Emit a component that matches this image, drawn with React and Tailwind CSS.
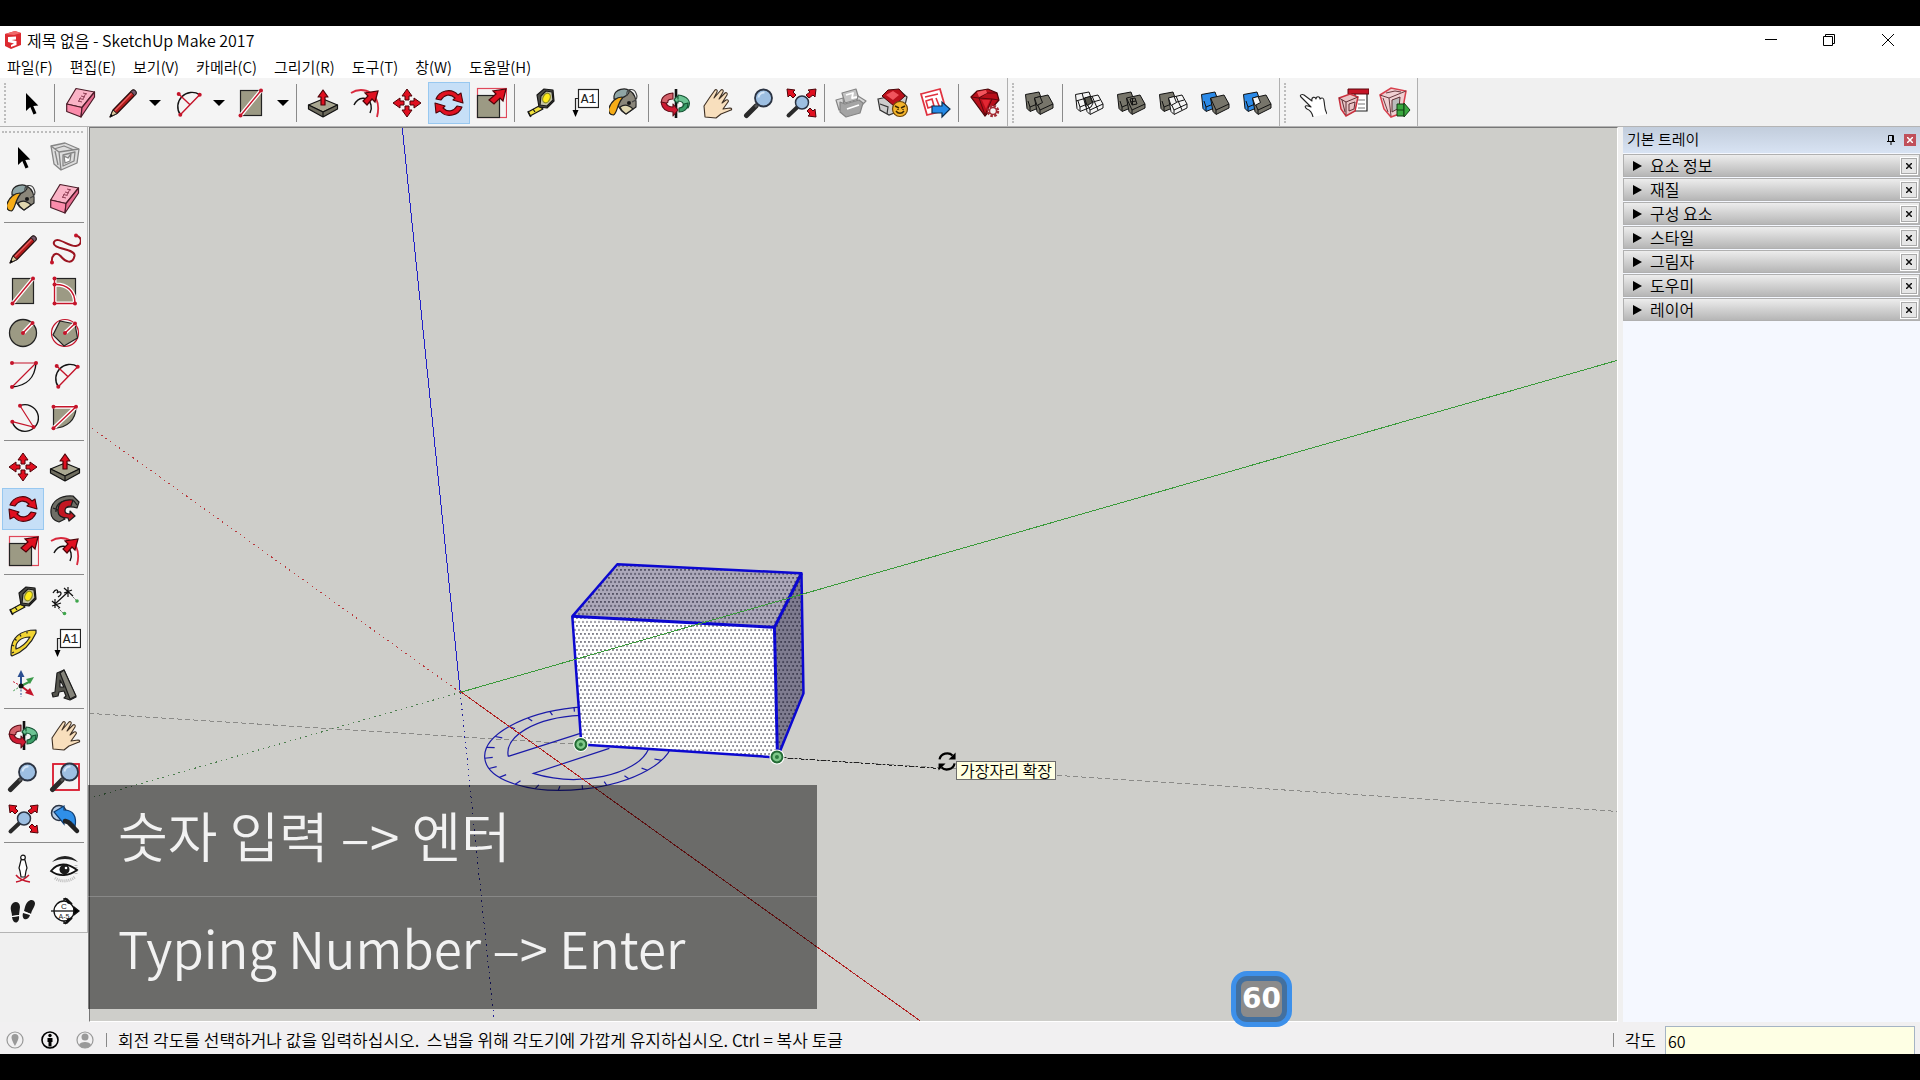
const RED = "#e01020"
const CRIMSON = "#c4142a"
const TAUPE = "#9c9a84"

function Glyph({ children }) {
  return (
    <svg viewBox="0 0 32 32" className="h-8 w-8 shrink-0" fill="none" aria-hidden="true">
      {children}
    </svg>
  )
}

function Dots({ at }) {
  return at.map(([x, y]) => <circle key={`${x}-${y}`} cx={x} cy={y} r="2" fill={CRIMSON} />)
}

function HaloLine({ d }) {
  return (
    <>
      <path d={d} stroke="#fff" strokeWidth="4" />
      <path d={d} stroke={CRIMSON} strokeWidth="1.4" />
    </>
  )
}

function Magnifier() {
  return (
    <>
      <path d="M3.500 28.500 13 19" stroke="#2a2a2a" strokeWidth="5" strokeLinecap="round" />
      <path d="M12 20l3-3" stroke="#555" strokeWidth="2.500" />
      <circle cx="20.500" cy="11" r="8.500" fill="#9dbfe2" stroke="#2b3342" strokeWidth="1.800" />
      <path d="M15.500 10.500a5.500 5.500 0 0 1 6-5" stroke="#d5e6f7" strokeWidth="2" />
    </>
  )
}

// two overlapping slabs shared by the solid tools
function Slabs({ back, front, middle, wire, inner }) {
  const line = { stroke: "#111", strokeWidth: 1, strokeLinejoin: "round" }
  return (
    <>
      <path d="M2.500 7.500 16 5l4 11-2 4-11 4.500-3-3z" fill={back} {...line} />
      <path d="M7 20l11-4.500M5 14l2 6v4" {...line} />
      <path d="M11.500 11 25 8l5 9v4l-13 6.500-3-3z" fill={front} {...line} />
      <path d="M11.500 11 17 23v4M17 23l13-6" {...line} />
      {wire === "front" && <path d="M19 9l6 14M13 17l14-4" {...line} />}
      {wire === "both" && <path d="M9 6l4 14M3 14l14-4M19 9l6 14M13 17l14-4" {...line} />}
      {middle && <path d="M11.500 11 17 9.500l2.500 6-5.500 3z" fill={middle} {...line} />}
      {inner && <path d="M15 12l5-1 2 6-5 1zM17.500 11v7M15 15l6-1" {...line} />}
    </>
  )
}

const RubyBody = () => (
  <>
    <path d="M2 10 8 4l11-2 9 4 2 7-14 16z" fill="#b80f1a" stroke="#4a0508" strokeWidth="1.200" />
    <path d="M2 10l8 1 8-5 10 0M10 11l6 17 7-16 7 1M10 11l13 1" stroke="#5d070c" />
    <path d="M8 5l9-2 1 3-8 4z" fill="#f2555d" />
    <path d="M13 13h8l-4 9z" fill="#e22733" />
  </>
)

const glyphs = {
  select: <path d="M11 6v18l4.300-4 3.200 7.500 3-1.300L18.300 19l5-.5z" fill="#000" />,
  component: (
    <g stroke="#858585" strokeWidth="1.300" strokeLinejoin="round">
      <path d="M2 5 16 2l14 6-2 14-16 7-7-6z" fill="#ddd" />
      <path d="M2 5l8 6 20-3M10 11l2 18M5 8l10-3 10 4M6 10l3 14M14 14l12-3-1 9-11 5z" />
      <path d="M15 15l4 2 3-4-1 7-5 2z" fill="#fff" />
    </g>
  ),
  paint: (
    <g stroke="#222" strokeWidth="1.200" strokeLinejoin="round">
      <path d="M7 7 20 3c5 3 8 8 7 17l-10 7c-6-3-10-9-10-20z" fill="#8a867a" />
      <path d="M11 20c4-3 9-2 13 2l-7 5c-3-2-5-3-6-7z" fill="#e0d6ae" />
      <path d="M5 9c1-7 12-9 15-5 1 4-9 9-15 8z" fill="#8fa5a5" />
      <path d="M18 9c-2-8 7-8 9-3 2 4 1 7-4 9" stroke="#444" />
      <path d="M13 10C8 10 2 14-.5 22c0 3 1 6 5 6 4-2 3-10 9-17z" fill="#f7ad17" />
      <circle cx="20" cy="16" r="1.500" fill="#111" />
    </g>
  ),
  eraser: (
    <g stroke="#4b1c28" strokeWidth="1.200" strokeLinejoin="round">
      <path d="M11 1.500 29.500 5 17 20.500 1.700 17z" fill="#fab3c6" />
      <path d="M1.700 17 17 20.500 16 30 1.700 24.500z" fill="#fb8cab" />
      <path d="M17 20.500 29.500 5v5L16 30z" fill="#e86d90" />
      <path d="M13 14l4 1M14.500 11.500l4 1M16 9l4 1M18 6l4 1M13.500 14.500l2-4M18 12l3-6" stroke="#8e3e54" strokeWidth="1" />
    </g>
  ),
  pencil: (
    <g strokeLinejoin="round">
      <path d="M3 30 6 23 25 3.500c2-1.500 5 1 4 3.500L10 26.500z" fill="#b31b1b" stroke="#2a0d0d" strokeWidth="1.200" />
      <path d="M3 30 6 23l4 3.500z" fill="#d9c79c" stroke="#222" />
      <path d="M3 30l1.200-3 1.600 1.500z" fill="#000" />
      <path d="M8 23.500 24.500 6.500" stroke="#e86060" strokeWidth="1.200" />
      <path d="M24 4.500 25 3.500c2-1.500 5 1 4 3.500l-1.500 1.500z" fill="#77576a" stroke="#222" />
    </g>
  ),
  freehand: (
    <>
      <path
        d="M27 2.500c7 2 6 9.500 0 10.500C20 14 8 2.500 5 9c-3 8 22 6 20.500 14-2 9-9 6-14 0C7 18 2 22 3 30"
        stroke="#9b1420"
        strokeWidth="2"
      />
      <Dots at={[[27, 2.5], [3, 29.5]]} />
    </>
  ),
  rect: (
    <>
      <rect x="5.500" y="3.500" width="21" height="25" fill={TAUPE} stroke="#222" strokeWidth="1.200" />
      <HaloLine d="M5.500 28.500 26 3.500" />
      <Dots at={[[5.5, 28.5], [26, 3.5]]} />
    </>
  ),
  rotatedRect: (
    <>
      <rect x="5.500" y="3.500" width="21" height="25" fill={TAUPE} stroke="#222" strokeWidth="1.200" />
      <HaloLine d="M5.500 9.500C18 9 26 16 26 28.500M5.500 3.500v25H26" />
      <Dots at={[[5.5, 3.5], [5.5, 9.5], [5.5, 28.5], [26, 28.5]]} />
    </>
  ),
  circle: (
    <>
      <circle cx="16" cy="16" r="13.500" fill={TAUPE} stroke="#222" strokeWidth="1.300" />
      <HaloLine d="M16 16 25.500 6" />
      <Dots at={[[16, 16], [25.5, 6]]} />
    </>
  ),
  polygon: (
    <>
      <circle cx="16" cy="16" r="13.500" stroke={CRIMSON} strokeWidth="1.200" />
      <path d="M11 4 26 7l2.500 14L15 29 4 18z" fill={TAUPE} stroke="#222" strokeWidth="1.200" />
      <HaloLine d="M16 16 26 6.500" />
      <Dots at={[[16, 16], [26, 6.5]]} />
    </>
  ),
  arc: (
    <>
      <path d="M29 4C28 18 20 27 5 28" stroke="#111" strokeWidth="1.400" />
      <path d="M5 4h24L5 28" stroke={CRIMSON} strokeWidth="1.200" />
      <Dots at={[[5, 4], [29, 4], [5, 28]]} />
    </>
  ),
  arc2: (
    <>
      <path d="M28.700 7.700A14.200 14.200 0 0 0 9.300 27.700" stroke="#111" strokeWidth="1.400" />
      <path d="M28.700 7.700 9.300 27.700M7.700 7 19 17.700" stroke={CRIMSON} strokeWidth="1.400" />
      <Dots at={[[28.7, 7.7], [9.3, 27.7], [7.7, 7]]} />
    </>
  ),
  arc3: (
    <>
      <path d="M13 4.700A13.300 13.300 0 1 1 5.300 20.700" stroke="#111" strokeWidth="1.400" />
      <path d="M13 4.700 26.500 26 5.300 20.700" stroke={CRIMSON} strokeWidth="1.200" />
      <Dots at={[[13, 4.7], [26.5, 26], [5.3, 20.7]]} />
    </>
  ),
  pie: (
    <>
      <path d="M4.500 5.700H27C27 19 18 27 4.500 27.300z" fill={TAUPE} stroke="#222" strokeWidth="1.200" />
      <HaloLine d="M4.500 5.700H27L4.500 27.300" />
      <Dots at={[[4.5, 5.7], [27, 5.7], [4.5, 27.3]]} />
    </>
  ),
  move: (
    <g fill={RED} stroke="#4d0308" strokeWidth="1">
      {[0, 90, 180, 270].map((deg) => (
        <path key={deg} d="M16 2l5 7h-3v4h-4V9h-3z" transform={`rotate(${deg} 16 16)`} />
      ))}
    </g>
  ),
  pushPull: (
    <g stroke="#111" strokeWidth="1.200" strokeLinejoin="round">
      <path d="M1.500 18 16 12l14.500 6L16 25z" fill="#a9a791" />
      <path d="M1.500 18 16 25v5L1.500 22zM30.500 18 16 25v5l14.500-8z" fill="#6e6c5e" />
      <path d="M16 3l5 7h-3v8h-4v-8h-3z" fill={RED} stroke="#4d0308" />
    </g>
  ),
  rotate: (
    <g fill={RED} stroke="#4d0308" strokeWidth="1.100" strokeLinejoin="round">
      <path d="M3 12C6 4 18 0 25 8l3-2 2 10-10-3 2-2c-5-5-11-3-14 2z" />
      <path d="M29 20C26 28 14 32 7 24l-4 2-1-10 10 3-2 2c5 5 11 3 14-2z" />
    </g>
  ),
  followMe: (
    <g stroke="#1d1d1d" strokeWidth="1.200" strokeLinejoin="round">
      <path d="M2 20C1 8 12 2 24 3l6 6-2 6c-9-3-15 0-15 6 0 3 1 4 3 5l-6 3c-5-1-8-5-8-9z" fill="#6f6e66" />
      <path d="M7 19C6 10 15 6 25 8l3 4M4 15l7 3" />
      <path d="M9 18C9 9 15 6 24 7l-2 6c-4 0-6 2-6 5 0 2 2 3 5 3v-3l5 5-6 5-1-3c-6 0-10-2-10-7z" fill="#c21722" />
    </g>
  ),
  scale: (
    <>
      <rect x="2.500" y="1.500" width="29" height="29" stroke="#e0485a" strokeWidth="1.200" />
      <rect x="2.500" y="8.500" width="22" height="22" fill={TAUPE} stroke="#222" strokeWidth="1.200" />
      <path d="M31 2l-3 12-3-3-6 6-5-4 7-6-3-3z" fill={RED} stroke="#4d0308" strokeWidth="1.200" />
    </>
  ),
  offset: (
    <>
      <path d="M2 6C14-2 34 6 28 30" stroke="#d8283c" strokeWidth="1.800" />
      <path d="M5 18c4-8 14-10 17 0 1 4 0 6-1 8" stroke="#111" strokeWidth="1.400" />
      <path d="M29 4l-3 11-3-3-5 6-4-4 5-5-3-3z" fill={RED} stroke="#4d0308" strokeWidth="1.200" />
    </>
  ),
  tape: (
    <g stroke="#161616" strokeWidth="1.200" strokeLinejoin="round">
      <path d="M3 25l11-6 4 3L5 29z" fill="#f1e23c" />
      <path d="M8 22l2 3M3 24l3 6" />
      <path d="M12 8 19 2l9 1 1 11-7 7-8-1z" fill="#4b4b45" />
      <path d="M16 9l5-5 6 1 1 8-6 6-7-1z" fill="#c5c4a8" />
      <ellipse cx="21.500" cy="11" rx="3.500" ry="5" transform="rotate(25 21.500 11)" fill="#ffec1a" stroke="#8a8a20" />
    </g>
  ),
  dimension: (
    <>
      <path d="M6 19 19 7M3 16l8 7M6 14v9M3 21l9-3M15 3l9 8M19 2v10M15 8l8-3" stroke="#111" strokeWidth="1.200" />
      <path d="M9 23l5 5M22 10l5 5" stroke="#666" strokeDasharray="2 1" />
      <path d="M4 8c3-5 6-3 4 0 4-3 6 1 1 4" stroke="#111" strokeWidth="1.300" />
      <circle cx="15.500" cy="28.500" r="1.800" fill="#3ea54b" />
      <circle cx="28" cy="16" r="1.800" fill="#3ea54b" />
    </>
  ),
  protractor: (
    <g stroke="#222" strokeWidth="1.200" strokeLinejoin="round">
      <path d="M4 24C4 11 13 3 29 3v3C24 17 16 25 5 29l-1-1z" fill="#f1d433" />
      <path d="M9 22c-1-7 5-12 14-12-3 5-8 10-14 12z" fill="#f4f4f4" />
      <path d="M5 18l2 1M8 12l1.500 1.500M13 7.500l1 2M20 4.500v2M5 26l2-1" />
    </g>
  ),
  text: (
    <>
      <rect x="11.500" y="2.500" width="20" height="18" fill="#fff" stroke="#222" strokeWidth="1.200" />
      <text x="21.500" y="16" fontSize="13" textAnchor="middle" fill="#222" className="font-['Liberation_Mono',monospace]">
        A1
      </text>
      <path d="M11 11.500H8.500v12" stroke="#222" strokeWidth="1.200" />
      <path d="M5.500 23h6l-3 7z" fill="#000" />
    </>
  ),
  axes: (
    <>
      <path d="M14 17V7" stroke="#2b4f91" strokeWidth="2" />
      <path d="M10.500 8 14 1l3.500 7z" fill="#2b4f91" />
      <path d="M14 17l8-4" stroke="#3c9a4a" strokeWidth="2" />
      <path d="M19 10l8-2-4 7z" fill="#3c9a4a" />
      <path d="M14 17l8 6" stroke={CRIMSON} strokeWidth="2" />
      <path d="M18 24l5-5 4 8z" fill={CRIMSON} />
      <path d="M14 17v11" stroke="#2b4f91" strokeDasharray="2 1.500" />
      <path d="M14 17l-8 5" stroke="#3c9a4a" strokeDasharray="2 1.500" />
      <path d="M14 17 5 12" stroke={CRIMSON} strokeDasharray="2 1.500" />
      <circle cx="14" cy="17" r="2.500" fill="#111" />
    </>
  ),
  text3d: (
    <g stroke="#1d1d1d" strokeWidth="1.200" strokeLinejoin="round">
      <path d="M8 4l7-3 12 27-6 3-6-2 2-2-2-5-5 1-1 4-5 1-1-4 3-1z" fill="#55554e" />
      <path d="M11 4l4-3 12 26-6 3z" fill="#85847a" />
      <path d="M11 11l4 7h-4z" fill="#f4f4f4" />
    </g>
  ),
  orbit: (
    <g strokeLinejoin="round" strokeWidth="1.100">
      <path d="M14 6C4 7 0 13 4 19l5-4c-1-2 2-3 5-3z" fill="#d4626b" stroke="#5d0d17" />
      <path d="M17 2v29" stroke="#111" strokeWidth="2.600" />
      <path d="M19 12V9c-2 1-3 2-4 4 2 2 3 3 4 3v-2c4 0 6 2 5 5l5 2c4-7-1-12-10-13z" fill="#6cc493" stroke="#145232" />
      <path d="M29 16c0 6-4 9-9 9v-4c3 0 5-2 5-4z" fill="#3b9e68" stroke="#145232" />
      <path d="M2 15c1 7 6 10 12 10v4l5-6-5-6v3c-4 0-6-1-7-4z" fill="#cf1a32" stroke="#5d0d17" />
    </g>
  ),
  pan: (
    <path
      d="M4 30 3 19l6-9 5-7c1-1 3 0 2 2l-3 6 7-8c1-1 3 0 2 2l-4 7 6-6c1-1 3 0 2 2l-5 8 4-3c2-1 3 1 2 2l-5 7 7-1c2 0 2 2 1 2l-10 4-5 4z"
      fill="#f8dfbd"
      stroke="#3d2f23"
      strokeWidth="1.100"
      strokeLinejoin="round"
    />
  ),
  zoom: <Magnifier />,
  zoomWindow: (
    <>
      <rect x="4" y="3" width="26" height="26" stroke="#d9182c" strokeWidth="1.800" />
      <Magnifier />
    </>
  ),
  extents: (
    <>
      <path d="M3.500 28.500 12 20.500" stroke="#2a2a2a" strokeWidth="4" strokeLinecap="round" />
      <circle cx="17" cy="15.500" r="6.500" fill="#9dbfe2" stroke="#2b3342" strokeWidth="1.500" />
      <g fill={RED} stroke="#4d0308">
        <path d="M2 2l8 1-2 2 3 3-3 3-3-3-2 2z" />
        <path d="M31 2l-8 1 2 2-4 3 3 3 4-3 2 2z" />
        <path d="M31 30l-8-1 2-2-3-3 3-3 3 3 2-2z" />
      </g>
    </>
  ),
  previous: (
    <>
      <circle cx="10" cy="10" r="7.500" fill="#b7cde6" stroke="#2b3342" strokeWidth="1.500" />
      <path d="M5 9 15 3v4c9 0 13 6 11 17-2-5-5-7-11-7v4z" fill="#2f8fe8" stroke="#0e3c70" strokeWidth="1.200" />
      <path d="M16 18l3 1 9 9" stroke="#222" strokeWidth="4.500" strokeLinecap="round" />
    </>
  ),
  camera: (
    <>
      <path d="M9 29c6-1 10-4 13-7M9 22c3 4 8 6 14 7" stroke={CRIMSON} strokeWidth="1.500" />
      <path d="M14 7c1-1 3-1 4 0l2 8-1 3-1 6h-4l-1-6-1-3z" fill="#fff" stroke="#111" strokeWidth="1.200" />
      <circle cx="16" cy="4.500" r="2.300" fill="#fff" stroke="#111" strokeWidth="1.200" />
    </>
  ),
  look: (
    <>
      <path d="M3 9C10 1 22 1 29 9c-8-4-18-4-26 0z" fill="#222" />
      <path d="M6 25c5 4 14 4 20-1" stroke="#bbb" strokeWidth="3" strokeDasharray="1 1" />
      <path d="M27 12v9" stroke="#bbb" strokeWidth="3" strokeDasharray="1 1" />
      <path d="M2 18c7-9 17-8 26-1-8 6-18 7-26 1z" fill="#fff" stroke="#111" strokeWidth="1.800" />
      <circle cx="15.500" cy="16.500" r="5" fill="#1a1a1a" />
      <circle cx="17" cy="15" r="1.300" fill="#fff" />
    </>
  ),
  walk: (
    <g fill="#1c1c1c">
      <path d="M4 11c2-6 9-5 9 1l-1 8-7 1C5 17 3 15 4 11zM5 22l7-1c1 8-6 9-7 1z" />
      <path d="M18 12c2-8 9-9 10-4 0 4-3 6-4 11l-7-3zM16 18l7 2c-2 7-9 5-7-2z" />
      <path d="M5 21.500l7-1M17 17l7 2.500" stroke="#fff" />
    </g>
  ),
  section: (
    <g stroke="#111" strokeWidth="1.300">
      <path d="M15 4h3l5 5M15 28h3l5-5M15 3v3M15 26v3" />
      <circle cx="15" cy="16" r="10" fill="#fff" />
      <path d="M2 16h28" />
      <path d="M16 3l7 6-4-1zM25 12l5 4-5 4zM16 29l7-6-4 1z" fill="#000" />
      <text x="15" y="14" fontSize="8" textAnchor="middle" fill="#222" stroke="none" className="font-['Liberation_Sans',sans-serif]">
        C
      </text>
      <text x="15" y="23.500" fontSize="7" textAnchor="middle" fill="#222" stroke="none" className="font-['Liberation_Sans',sans-serif]">
        A-5
      </text>
    </g>
  ),
  warehouse: (
    <g stroke="#858585" strokeWidth="1.200" strokeLinejoin="round">
      <path d="M1 13l7-2 1 9-5 3z" fill="#d8d8d8" />
      <path d="M7 6 21 2l3 10-14 4z" fill="#c4c4c4" />
      <path d="M23 9l8 5-5 5-4-6z" fill="#d8d8d8" />
      <path d="M5 15l5 2 14-4 4 3-3 10-14 4-6-5z" fill="#a4a4a4" />
      <path d="M11 8l7-2-1 5 5-1M12 22l12-4" stroke="#fff" strokeWidth="1.800" />
    </g>
  ),
  extension: (
    <>
      <path d="M1 12l9-2 12-7 8 7-3 12-15 6-9-5z" fill="#ccc" stroke="#333" strokeWidth="1.200" />
      <path d="M5 9l6-6 11-1 6 7-11 10z" fill="#b9101b" stroke="#4a0508" />
      <path d="M9 8l7-4 6 4-6 5z" fill="#f0545d" />
      <path d="M3 17l8 3-1 7" stroke="#333" strokeWidth="1.200" />
      <circle cx="23" cy="22" r="7.500" fill="#f4b52b" stroke="#6d4606" strokeWidth="1.200" />
      <path d="M18 19l4 2M28 19l-4 2M19 24c2 3 6 3 8 0M21 22v1M26 22v1" stroke="#3c2803" strokeWidth="1.400" />
    </>
  ),
  layout: (
    <>
      <path d="M2 7 21 2l6 21-19 5z" fill="#fff" stroke="#e0323f" strokeWidth="1.800" />
      <path d="M6 10l13-3M7 14l6-2 2 7-6 2zM17 11l4 10" stroke="#e0323f" strokeWidth="1.600" />
      <path d="M13 19h10v-4l8 7-8 8v-4H13z" fill="#258ae6" stroke="#0d2c4c" strokeWidth="1.200" />
    </>
  ),
  ruby: (
    <>
      <RubyBody />
      <circle cx="24" cy="24" r="5" fill="#f4f4f4" stroke="#a32a33" strokeWidth="2.500" strokeDasharray="2.500 1.400" />
      <circle cx="24" cy="24" r="3.500" fill="#f4f4f4" stroke="#a32a33" strokeWidth="1.500" />
    </>
  ),
  shell: <Slabs back="#77756a" front="#77756a" middle="#77756a" />,
  intersect: <Slabs back="#f4f4f4" front="none" middle="#5a594f" wire="both" />,
  union: <Slabs back="#77756a" front="#77756a" inner />,
  subtract: <Slabs back="#77756a" front="#f4f4f4" middle="#f4f4f4" wire="front" />,
  trim: <Slabs back="#2b8ae8" front="#77756a" />,
  split: <Slabs back="#2b8ae8" front="#77756a" middle="#f4f4f4" />,
  interact: (
    <path
      d="M18 30c-1-5-3-7-6-8-3-2-2-4 1-3l3 1L6 10c-2-2 1-3 3-2l8 6c-1-4 3-5 4-2 0-3 4-3 4 0 2-2 4-1 4 2 1 4 0 8 3 13"
      fill="#fff"
      stroke="#222"
      strokeWidth="1.100"
      strokeLinejoin="round"
    />
  ),
  options: (
    <>
      <path d="M18 5h12v19H18z" fill="#fff" stroke="#222" strokeWidth="1.200" />
      <path d="M21 13h7M21 17h7M21 21h7" stroke="#777" />
      <path d="M11 2h21v5H11z" fill="#c61527" stroke="#5d0911" />
      <path d="M2 11l11-4 8 3-3 14-9 5-5-7z" fill="#e9c4c6" stroke="#c92f3d" strokeWidth="1.500" />
      <path d="M2 11l7 4 12-5M9 15v13M12 17l6-2-1 7-5 2zM5 13l3 12" stroke="#5f3035" />
    </>
  ),
  attributes: (
    <>
      <path d="M1 8 12 1l15 3-4 22-11 4-7-8z" fill="#efd0d2" stroke="#d8404d" strokeWidth="1.500" />
      <path d="M1 8l9 3 17-7M10 11l2 18M7 6l9-2 6 1M4 11l5 14" stroke="#6a3b40" />
      <path d="M13 13l8-3-1 11-7 4z" fill="#bbb" stroke="#5f3035" />
      <path d="M18 17h7v12h-7zM18 23h7" fill="#3aa83f" stroke="#123f15" />
      <path d="M25 16l6 7-6 7z" fill="#3aa83f" stroke="#123f15" />
    </>
  ),
}

const mainTools = [
  [["select"], "|", ["eraser"], ["pencil", true], ["arc2", true], ["rect", true], "|",
    ["pushPull"], ["offset"], ["move"], ["rotate"], ["scale"], "|", ["tape"], ["text"], ["paint"], "|",
    ["orbit"], ["pan"], ["zoom"], ["extents"], "|", ["warehouse"], ["extension"], ["layout"], "|", ["ruby"]],
  [["shell"], "|", ["intersect"], ["union"], ["subtract"], ["trim"], ["split"]],
  [["interact"], ["options"], ["attributes"]],
]

const sideTools = [
  ["select", "component", "paint", "eraser"],
  ["pencil", "freehand", "rect", "rotatedRect", "circle", "polygon", "arc", "arc2", "arc3", "pie"],
  ["move", "pushPull", "rotate", "followMe", "scale", "offset"],
  ["tape", "dimension", "protractor", "text", "axes", "text3d"],
  ["orbit", "pan", "zoom", "zoomWindow", "extents", "previous"],
  ["camera", "look", "walk", "section"],
]

const menus = ["파일(F)", "편집(E)", "보기(V)", "카메라(C)", "그리기(R)", "도구(T)", "창(W)", "도움말(H)"]
const panels = ["요소 정보", "재질", "구성 요소", "스타일", "그림자", "도우미", "레이어"]

function ToolButton({ name }) {
  const active = name === "rotate"
  return (
    <button
      type="button"
      aria-label={name}
      aria-pressed={active}
      className={`flex h-[42px] w-[42px] items-center justify-center border ${
        active ? "border-[#98c8f0] bg-[#c6dff7]" : "border-transparent"
      }`}
    >
      <Glyph>{glyphs[name]}</Glyph>
    </button>
  )
}

function TitleBar() {
  return (
    <div className="flex h-7 items-center justify-between bg-white pr-[2px] pl-1">
      <div className="flex items-center gap-[5px]">
        <svg viewBox="0 0 18 20" className="h-5 w-[18px]" aria-hidden="true">
          <path d="M1 4 11 1l6 2v12l-10 4-6-3z" fill="#dc2a30" />
          <path d="M1 4l9 1 7-2-6-2z" fill="#f06a6a" />
          <path d="M4 7l8-.5v3L7.500 10l5 1v4L7 17v-2l3-1.500L4 12z" fill="#fff" />
        </svg>
        <h1 className="text-base leading-5 font-[350]">제목 없음 - SketchUp Make 2017</h1>
      </div>
      <div className="flex">
        <button type="button" aria-label="최소화" className="flex h-7 w-[58px] items-center justify-center">
          <svg viewBox="0 0 12 12" className="h-3 w-3" stroke="#000">
            <path d="M0 5.500h12" />
          </svg>
        </button>
        <button type="button" aria-label="이전 크기로" className="flex h-7 w-[58px] items-center justify-center">
          <svg viewBox="0 0 12 12" className="h-3 w-3" fill="none" stroke="#000">
            <path d="M.5 2.500h9v9h-9zM2.500 2.500v-2h9v9h-2" />
          </svg>
        </button>
        <button type="button" aria-label="닫기" className="flex h-7 w-[60px] items-center justify-center">
          <svg viewBox="0 0 12 12" className="h-3 w-3" stroke="#000">
            <path d="M0 0l12 12M12 0 0 12" />
          </svg>
        </button>
      </div>
    </div>
  )
}

function Toolbar() {
  return (
    <div className="flex h-[49px] border-b border-[#b4b4b4] bg-[#f0f0f0]">
      {mainTools.map((group, g) => (
        <div key={g} className="flex items-center border-r border-[#b0b0b0] bg-[#f4f4f4] pt-px pr-px pl-1">
          <span className="mr-1 h-10 border-l-2 border-dotted border-[#bdbdbd]" />
          {group.map((item, i) => {
            if (item === "|") return <span key={i} className="mr-[5px] ml-[2px] h-[38px] w-px bg-[#8a8a8a]" />
            const [name, menu] = item
            return (
              <div key={i} className="flex">
                <ToolButton name={name} />
                {menu && (
                  <button type="button" aria-label={`${name} menu`} className="flex w-[22px] items-center justify-center">
                    <svg viewBox="0 0 12 8" className="h-2 w-3">
                      <path d="M0 1h12L6 7z" />
                    </svg>
                  </button>
                )}
              </div>
            )
          })}
        </div>
      ))}
    </div>
  )
}

function SideTools() {
  return (
    <aside className="w-[89px] shrink-0">
      <div className="mr-px border-r border-b border-[#b4b4b4] bg-[#f4f4f4] pt-1 pl-[2px]">
        <div className="mr-1 mb-[3px] border-t-2 border-dotted border-[#bdbdbd]" />
        {sideTools.map((group, i) => (
          <div key={i}>
            {i > 0 && <div className="mt-[2px] mr-[3px] mb-[5px] ml-[2px] h-px bg-[#8a8a8a]" />}
            <div className="grid grid-cols-[42px_42px]">
              {group.map((name) => (
                <ToolButton key={name} name={name} />
              ))}
            </div>
          </div>
        ))}
      </div>
    </aside>
  )
}

// protractor lies flat on the ground plane, so it is drawn as a tilted ellipse
const ticks = Array.from({ length: 24 }, (_, i) => {
  const a = (i * Math.PI) / 12
  return [94 * Math.cos(a), 41 * Math.sin(a), 86 * Math.cos(a), 37 * Math.sin(a)]
})

function Pin({ x, y }) {
  return (
    <g>
      <circle cx={x} cy={y} r="7.500" fill="#fff" />
      <circle cx={x} cy={y} r="5.500" fill="#7fc98a" stroke="#246b35" strokeWidth="2" />
      <circle cx={x} cy={y} r="2" fill="#2f7d40" />
    </g>
  )
}

function Scene() {
  return (
    <svg
      viewBox="90 128 1526 893"
      preserveAspectRatio="xMinYMin slice"
      className="absolute inset-0 h-full w-full"
      fill="none"
      role="img"
      aria-label="모델"
    >
      <defs>
        <pattern id="picked" width="4" height="8" patternUnits="userSpaceOnUse">
          <rect x="0" y="1" width="1.300" height="1.300" fill="#000014" />
          <rect x="2" y="5" width="1.300" height="1.300" fill="#000014" />
        </pattern>
      </defs>
      <g shapeRendering="crispEdges">
        <path d="M89 713 581 744M777 757l840 54" stroke="#8b8b88" strokeDasharray="5 3" />
        <path d="M777 757l162 11" stroke="#222" strokeDasharray="5 2 2 2" />
        <path d="M460 692 89 426" stroke="#b8383c" strokeDasharray="1.500 4" />
        <path d="M460 692 89 798" stroke="#4d7f4f" strokeDasharray="1.500 4" />
        <path d="M460 692l34 330" stroke="#22229a" strokeDasharray="1.500 4" />
        <path d="M460 692 402 127" stroke="#2020c8" />
      </g>

      <g stroke="#1a1aa8" strokeWidth="1.200">
        <g transform="translate(578 748) rotate(-6)">
          <ellipse rx="94" ry="41" />
          {ticks.map(([x1, y1, x2, y2], i) => (
            <path key={i} d={`M${x1} ${y1}L${x2} ${y2}`} />
          ))}
        </g>
        <path d="M508 756C504 736 535 717 580 715M508 756l72-23" />
        <path d="M609 748l-76 25c45 14 103 2 115-24" />
      </g>

      <path d="M617 564l184 9-27 54-202-11z" fill="#aca8ba" />
      <path d="M801 573l2 120-26 64-3-130z" fill="#7f7c90" />
      <path d="M572 616l202 11 3 130-196-13z" fill="#fff" />
      <path d="M617 564l184 9 2 120-26 64-196-13-9-128z" fill="url(#picked)" />
      <g stroke="#0c08d0" strokeWidth="2.500" strokeLinejoin="round">
        <path d="M617 564l184 9 2 120-26 64-196-13-9-128z" />
        <path d="M572 616l202 11 27-54M774 627l3 130" strokeWidth="3" />
      </g>

      <g shapeRendering="crispEdges">
        <path d="M460 692 1617 360" stroke="#3a9a3a" />
        <path d="M460 691l462 331" stroke="#b02020" />
      </g>
      <Pin x="580.500" y="744" />
      <Pin x="776.500" y="756.500" />

      <g stroke="#000" strokeWidth="2.200">
        <path d="M939 759c1-6 9-8 13-4M954 763c-1 6-9 8-13 4" />
        <path d="M955 752v7h-7zM938 770v-7h7z" fill="#000" stroke="none" />
      </g>
    </svg>
  )
}

function Viewport() {
  return (
    <main className="relative min-w-0 flex-1 border border-t-[#777] border-r-white border-b-white border-l-[#777] bg-[#cececa]">
      <Scene />
      <div
        role="tooltip"
        className="absolute top-[633px] left-[866px] border border-[#6b6b6b] bg-[#ffffe1] px-[3px] text-base leading-[17px] font-[350] whitespace-nowrap"
      >
        가장자리 확장
      </div>
      <div className="absolute bottom-3 -left-[2px] w-[729px] bg-black/48 leading-[80px] font-[350] text-[#f2f2f2]">
        <p className="h-28 border-b border-white/20 px-[30px] pt-[10px] text-[54px]">숫자 입력 –&gt; 엔터</p>
        <p className="h-28 px-[30px] pt-[10px] text-[51px]">Typing Number –&gt; Enter</p>
      </div>
      <div className="absolute right-[325px] -bottom-[6px] z-10 rounded-[16px] bg-[#3d90ea] p-[5px]">
        <div className="rounded-[11px] bg-[#43709f] p-[5px]">
          <div className="flex h-9 w-[41px] items-center justify-center rounded-md bg-[#8b8b8b] font-['DejaVu_Sans',sans-serif] text-[28px] leading-8 font-bold text-white">
            60
          </div>
        </div>
      </div>
    </main>
  )
}

function Tray() {
  return (
    <aside className="ml-[5px] w-[297px] shrink-0 bg-[#f5f8ff] font-[350]">
      <div className="mb-px flex h-[26px] items-center justify-between bg-linear-to-b from-[#c2cddc] to-[#d8e3f3] pr-1 pl-1">
        <h2 className="pb-[2px] text-[15px] leading-5">기본 트레이</h2>
        <div className="flex items-center gap-2">
          <button type="button" aria-label="고정" className="pr-px">
            <svg viewBox="0 0 8 10" className="h-[10px] w-2" fill="none" stroke="#000">
              <path d="M1.500 6V.5h5V6M5.500.5V6M0 6.500h8M4 6.500V10" />
            </svg>
          </button>
          <button type="button" aria-label="닫기" className="flex h-3 w-3 items-center justify-center bg-[#c0505a]">
            <svg viewBox="0 0 6 6" className="h-[6px] w-[6px]" stroke="#fff" strokeWidth="1.500">
              <path d="M0 0l6 6M6 0 0 6" />
            </svg>
          </button>
        </div>
      </div>
      {panels.map((title) => (
        <section
          key={title}
          className="mb-px flex h-[23px] items-center border border-[#b0b0b0] bg-linear-to-b from-[#ededed] to-[#b6b6b6] pr-[2px] pl-[9px]"
        >
          <button type="button" className="flex flex-1 items-center gap-2 text-left">
            <svg viewBox="0 0 9 10" className="h-[10px] w-[9px]">
              <path d="M0 0v10l9-5z" />
            </svg>
            <span className="pb-[2px] text-base leading-5">{title}</span>
          </button>
          <button
            type="button"
            aria-label={`${title} 닫기`}
            className="flex h-4 w-4 items-center justify-center border border-[#aaa] bg-[#e6e6e6] outline outline-white"
          >
            <svg viewBox="0 0 6 6" className="h-[6px] w-[6px]" stroke="#111" strokeWidth="1.500">
              <path d="M0 0l6 6M6 0 0 6" />
            </svg>
          </button>
        </section>
      ))}
    </aside>
  )
}

function StatusBar() {
  return (
    <footer className="flex h-8 items-center bg-[#f1f0f1] pt-1 pr-[5px] pl-[6px] text-[17px] leading-5 font-[350]">
      <div className="flex gap-[17px]">
        <button type="button" aria-label="위치">
          <svg viewBox="0 0 18 18" className="h-[18px] w-[18px]" fill="none">
            <circle cx="9" cy="9" r="8" stroke="#999" strokeWidth="1.200" />
            <path d="M9 3a3.500 3.500 0 0 1 3.500 3.500C12.500 9 9 15 9 15S5.500 9 5.500 6.500A3.500 3.500 0 0 1 9 3z" fill="#999" />
          </svg>
        </button>
        <button type="button" aria-label="만든 사람">
          <svg viewBox="0 0 18 18" className="h-[18px] w-[18px]" fill="none">
            <circle cx="9" cy="9" r="8" stroke="#000" strokeWidth="1.600" />
            <circle cx="9" cy="4.500" r="1.700" fill="#000" />
            <path d="M6.500 7h5v4H10.500v4.500h-3V11h-1z" fill="#000" />
          </svg>
        </button>
        <button type="button" aria-label="로그인">
          <svg viewBox="0 0 18 18" className="h-[18px] w-[18px]" fill="none">
            <circle cx="9" cy="9" r="8" stroke="#999" strokeWidth="1.200" />
            <circle cx="9" cy="6" r="3.500" fill="#999" />
            <path d="M3 14c1-4 11-4 12 0-3 4-9 4-12 0z" fill="#999" />
          </svg>
        </button>
      </div>
      <span className="mr-[11px] ml-3 h-[14px] w-px bg-[#888]" />
      <p className="flex-1 whitespace-pre">
        회전 각도를 선택하거나 값을 입력하십시오.&nbsp; 스냅을 위해 각도기에 가깝게 유지하십시오. Ctrl = 복사 토글
      </p>
      <span className="mr-[11px] h-[14px] w-px bg-[#888]" />
      <label htmlFor="vcb" className="mr-[9px]">
        각도
      </label>
      <input
        id="vcb"
        defaultValue="60"
        className="h-7 w-[250px] border border-b-0 border-[#a5b4c4] bg-[#feffe4] px-[2px] text-base outline-none"
      />
    </footer>
  )
}

export default function App() {
  return (
    <div className="flex min-h-screen flex-col bg-black py-[26px] font-['Noto_Sans_CJK_KR',sans-serif] text-black">
      <div className="flex flex-1 flex-col bg-[#f0f0f0]">
        <TitleBar />
        <nav className="flex h-6 items-center gap-[17px] bg-white pt-px pl-[7px] text-[15px] leading-[22px] font-[350]">
          {menus.map((menu) => (
            <button key={menu} type="button">
              {menu}
            </button>
          ))}
        </nav>
        <Toolbar />
        <div className="flex flex-1">
          <SideTools />
          <Viewport />
          <Tray />
        </div>
        <StatusBar />
      </div>
    </div>
  )
}
